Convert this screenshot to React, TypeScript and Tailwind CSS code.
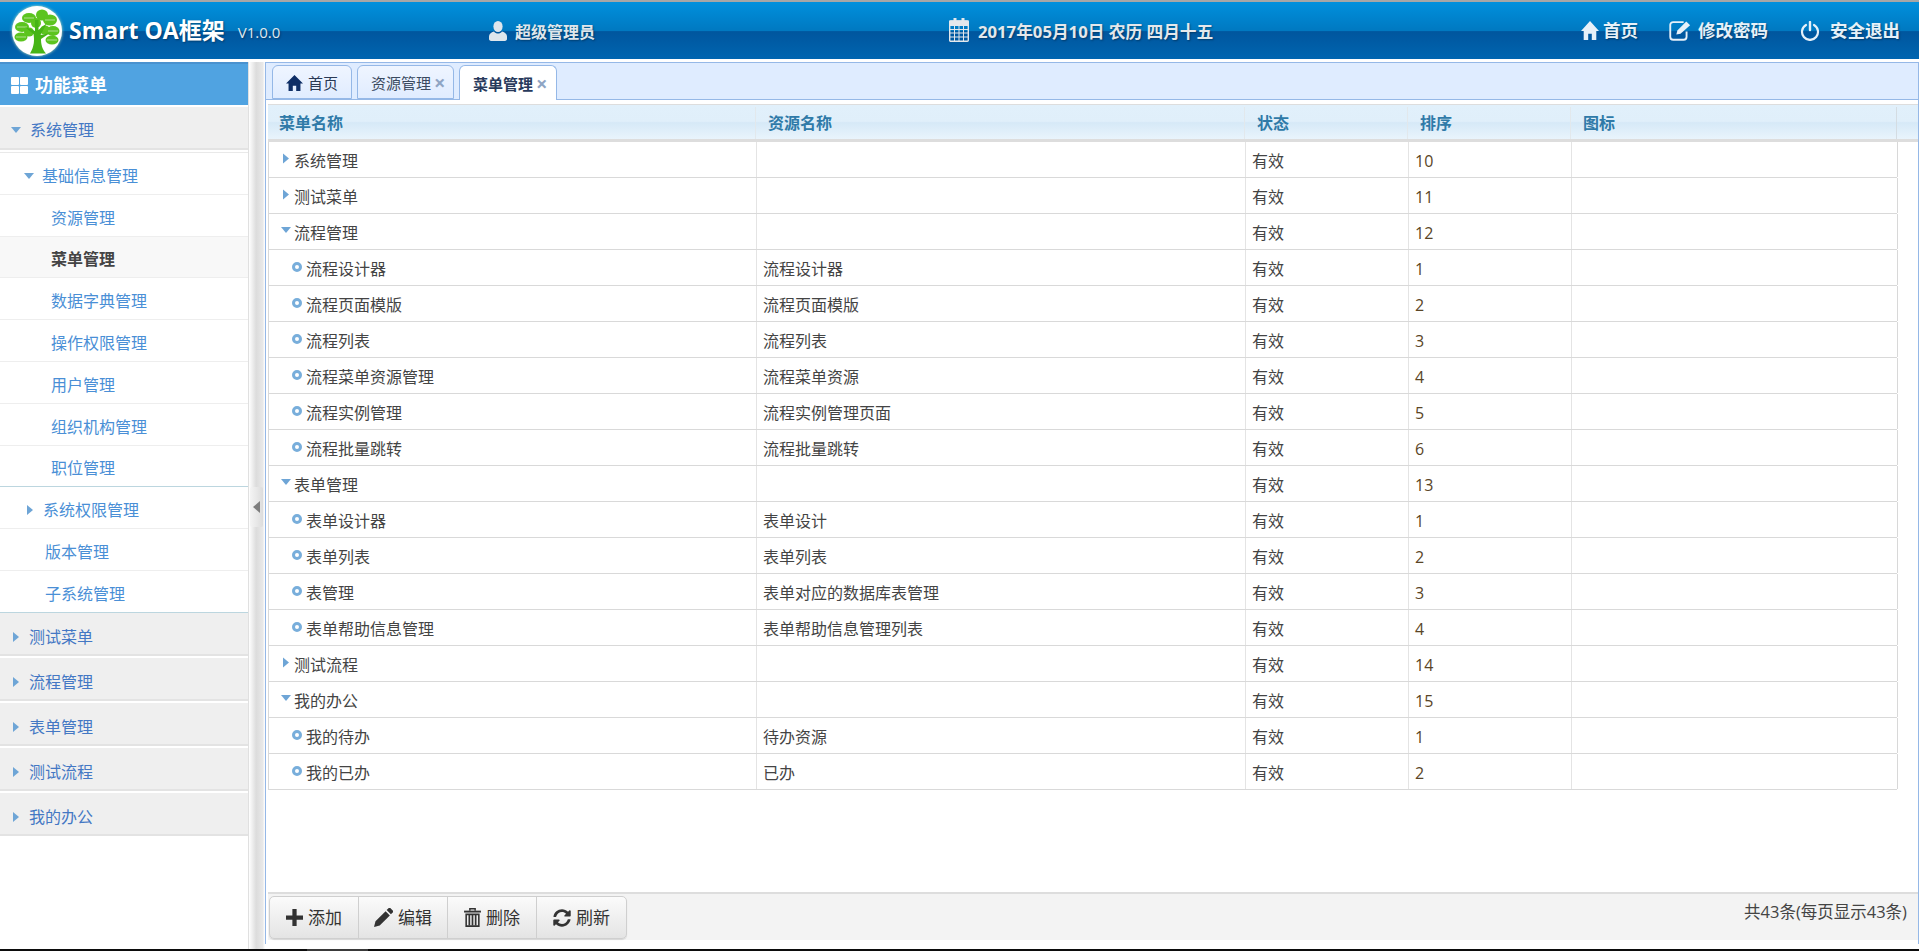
import React from 'react';
import { FaSyncAlt } from 'react-icons/fa';

type Row = { name: string; res: string; order: number; kind: 'closed' | 'open' | 'leaf' };

const rows: Row[] = [
	{ name: '系统管理', res: '', order: 10, kind: 'closed' },
	{ name: '测试菜单', res: '', order: 11, kind: 'closed' },
	{ name: '流程管理', res: '', order: 12, kind: 'open' },
	{ name: '流程设计器', res: '流程设计器', order: 1, kind: 'leaf' },
	{ name: '流程页面模版', res: '流程页面模版', order: 2, kind: 'leaf' },
	{ name: '流程列表', res: '流程列表', order: 3, kind: 'leaf' },
	{ name: '流程菜单资源管理', res: '流程菜单资源', order: 4, kind: 'leaf' },
	{ name: '流程实例管理', res: '流程实例管理页面', order: 5, kind: 'leaf' },
	{ name: '流程批量跳转', res: '流程批量跳转', order: 6, kind: 'leaf' },
	{ name: '表单管理', res: '', order: 13, kind: 'open' },
	{ name: '表单设计器', res: '表单设计', order: 1, kind: 'leaf' },
	{ name: '表单列表', res: '表单列表', order: 2, kind: 'leaf' },
	{ name: '表管理', res: '表单对应的数据库表管理', order: 3, kind: 'leaf' },
	{ name: '表单帮助信息管理', res: '表单帮助信息管理列表', order: 4, kind: 'leaf' },
	{ name: '测试流程', res: '', order: 14, kind: 'closed' },
	{ name: '我的办公', res: '', order: 15, kind: 'open' },
	{ name: '我的待办', res: '待办资源', order: 1, kind: 'leaf' },
	{ name: '我的已办', res: '已办', order: 2, kind: 'leaf' },
];

const subItems = ['资源管理', '菜单管理', '数据字典管理', '操作权限管理', '用户管理', '组织机构管理', '职位管理'];
const groups = ['测试菜单', '流程管理', '表单管理', '测试流程', '我的办公'];

const TriRight = ({ className }: { className: string }) => (
	<svg viewBox="0 0 6 10" className={className}>
		<polygon points="0,0 6,5 0,10" fill="#6ea5d6" />
	</svg>
);

const TriDown = ({ className }: { className: string }) => (
	<svg viewBox="0 0 10 6" className={className}>
		<polygon points="0,0 10,0 5,6" fill="#6ea5d6" />
	</svg>
);

const HomeIcon = ({ className }: { className: string }) => (
	<svg viewBox="0 0 20 18" className={className} fill="currentColor" preserveAspectRatio="none">
		<path d="M10 0 L20 9.5 H17 V18 H12 V12 H8 V18 H3 V9.5 H0 Z" />
	</svg>
);

const UserIcon = ({ className }: { className: string }) => (
	<svg viewBox="0 0 18 20" className={className} fill="currentColor">
		<ellipse cx="9" cy="5.5" rx="4.6" ry="5.5" />
		<path d="M5 10.5 C2 11.5 0 13 0 15.5 V18 C0 19.4 1.5 20 3 20 H15 C16.5 20 18 19.4 18 18 V15.5 C18 13 16 11.5 13 10.5 C12 12 10.5 12.6 9 12.6 C7.5 12.6 6 12 5 10.5 Z" />
	</svg>
);

const CalendarIcon = ({ className }: { className: string }) => (
	<svg viewBox="0 0 20 24" className={className} fill="none" stroke="currentColor">
		<rect x="0.7" y="3" width="18.6" height="20.3" rx="1" strokeWidth="1.4" />
		<rect x="0.7" y="3" width="18.6" height="4.5" fill="currentColor" strokeWidth="1" />
		<path d="M6 0.5 V5 M14 0.5 V5" strokeWidth="3" strokeLinecap="round" />
		<path d="M1 11.5 H19 M1 15 H19 M1 19 H19 M5.5 7.5 V23 M10 7.5 V23 M14.5 7.5 V23" strokeWidth="1" />
	</svg>
);

const EditIcon = ({ className }: { className: string }) => (
	<svg viewBox="0 0 22 20" className={className} fill="none" stroke="currentColor">
		<path d="M14 2 H4 C2.4 2 1.2 3 1.2 4.6 V16 C1.2 17.7 2.4 18.8 4 18.8 H14 C15.6 18.8 16.8 17.7 16.8 16 V11" strokeWidth="1.8" />
		<path d="M7 13.8 L8 10 L16.5 1.5 L20.2 5 L11 13 Z" fill="currentColor" stroke="none" />
	</svg>
);

const PowerIcon = ({ className }: { className: string }) => (
	<svg viewBox="0 0 20 20" className={className} fill="none" stroke="currentColor">
		<path d="M6 4 A8 8 0 1 0 14 4" strokeWidth="2.2" strokeLinecap="round" />
		<path d="M10 1 V9" strokeWidth="2.4" strokeLinecap="round" />
	</svg>
);

const GridIcon = () => (
	<div className="grid h-[17px] w-[17px] grid-cols-2 gap-[1.5px]">
		<span className="rounded-[1px] bg-white" />
		<span className="rounded-[1px] bg-white" />
		<span className="rounded-[1px] bg-white" />
		<span className="rounded-[1px] bg-white" />
	</div>
);

const PlusIcon = () => (
	<svg viewBox="0 0 16 16" className="h-[17px] w-[17px]" fill="#333">
		<path d="M6 0 H10 V6 H16 V10 H10 V16 H6 V10 H0 V6 H6 Z" />
	</svg>
);

const PencilIcon = () => (
	<svg viewBox="0 0 18 18" className="h-[19px] w-[19px]" fill="#333">
		<path d="M0 18 L1.4 12.6 L11 3 L15 7 L5.4 16.6 Z M12 2 L14 0 C14.6 -0.4 15 -0.4 15.4 0 L18 2.6 C18.4 3 18.4 3.4 18 4 L16 6 Z" />
	</svg>
);

const TrashIcon = () => (
	<svg viewBox="0 0 16 18" className="h-[19px] w-[17px]" fill="none" stroke="#333">
		<path d="M0 3.4 H16" strokeWidth="1.8" />
		<path d="M5.5 2.5 V0.8 H10.5 V2.5" strokeWidth="1.4" />
		<path d="M2 6 H14 V17.2 H2 Z" strokeWidth="1.5" />
		<path d="M5 6.5 V16.5 M8 6.5 V16.5 M11 6.5 V16.5" strokeWidth="1.6" />
	</svg>
);

const TreeLogo = () => (
	<div className="flex h-[50px] w-[50px] items-center justify-center rounded-full bg-white shadow-[0_0_3px_#cfe8c0]">
		<svg viewBox="0 0 50 50" className="h-[50px] w-[50px]">
			<g fill="#5cc41f">
				<ellipse cx="17" cy="12" rx="7" ry="5" />
				<ellipse cx="30" cy="9" rx="6" ry="5.5" />
				<ellipse cx="38" cy="14" rx="7" ry="5.5" />
				<ellipse cx="10" cy="21" rx="7" ry="5" />
				<ellipse cx="24" cy="17" rx="5" ry="5" />
				<ellipse cx="41" cy="25" rx="6.5" ry="5" />
				<ellipse cx="9" cy="31" rx="6.5" ry="4.5" />
				<ellipse cx="40" cy="34" rx="6.5" ry="4.5" />
				<ellipse cx="17" cy="26" rx="5" ry="4.5" />
				<ellipse cx="33" cy="24" rx="5" ry="4.5" />
			</g>
			<g stroke="#ffffff" strokeWidth="0.5" fill="none">
				<path d="M12 12 L22 12 M33 14 L43 14 M5 21 L15 21 M36 25 L46 25 M4 31 L14 31 M35 34 L45 34" />
			</g>
			<path d="M18 47.5 C22.5 40 22.5 34 21.5 28 L13 21 L23 25 L23 14 L26.5 14 L26.5 24 L35 17 L28.5 29 L38 27 L29 33 C29 38 30 43 34 47.5 Z" fill="#46b416" />
		</svg>
	</div>
);

const Tab = ({ label, active, home }: { label: string; active?: boolean; home?: boolean }) => (
	<div
		className={`flex h-[34px] items-center rounded-t-[6px] border border-[#95b8e7] pt-[2px] text-[15px] ${
			active
				? 'h-[35px] w-[98px] -mb-px border-b-0 bg-white pl-[13px] font-bold text-[#283a5c]'
				: home
					? 'w-[80px] bg-gradient-to-b from-[#eff5ff] to-[#e0ecff] pl-[13px] text-[#2a3a55]'
					: 'w-[97px] bg-gradient-to-b from-[#eff5ff] to-[#e0ecff] pl-[13px] text-[#3a4a60]'
		}`}
	>
		{home && <HomeIcon className="mr-[5px] h-[16px] w-[17px] text-[#0e2e66]" />}
		<span>{label}</span>
		{!home && <span className="ml-[3px] text-[20px] font-bold leading-none text-[#8fa5c4]">×</span>}
	</div>
);

const ToolButton = ({ icon, label, last }: { icon: React.ReactNode; label: string; last?: boolean }) => (
	<div
		className={`flex h-full w-[89px] items-center justify-center gap-[5px] text-[17px] text-[#333] ${
			last ? '' : 'border-r border-[#cfcfcf]'
		}`}
	>
		{icon}
		<span>{label}</span>
	</div>
);

export default function App() {
	return (
		<div className="flex h-[951px] w-[1919px] flex-col overflow-hidden bg-white font-['Open_Sans','Noto_Sans_CJK_SC',sans-serif]">
			{/* top bar */}
			<header className="flex h-[59px] shrink-0 items-center border-t-2 border-[#a6a6a6] bg-[linear-gradient(to_bottom,#0090dd_0%,#0079c1_50%,#00569e_52%,#0065b0_100%)] text-white [text-shadow:1px_1px_2px_rgba(0,0,0,0.35)]">
				<div className="ml-[12px] flex w-[477px] items-center">
					<TreeLogo />
					<span className="ml-[7px] text-[23px] font-bold leading-none">Smart OA框架</span>
					<span className="ml-[13px] mt-[3px] text-[15px] text-[#dfe8f0]">V1.0.0</span>
				</div>
				<div className="flex w-[460px] items-center text-[#dfe6ec]">
					<UserIcon className="h-[20px] w-[18px]" />
					<span className="ml-[8px] mt-[3px] text-[16px] font-bold">超级管理员</span>
				</div>
				<div className="flex items-center text-[#e4e8ec]">
					<CalendarIcon className="h-[24px] w-[20px]" />
					<span className="ml-[9px] mt-[3px] text-[16.7px] font-bold">2017年05月10日 农历 四月十五</span>
				</div>
				<div className="ml-auto mr-[19px] flex items-center text-[#e6f1f9]">
					<HomeIcon className="h-[19px] w-[18px]" />
					<span className="ml-[4px] text-[17.5px] font-bold">首页</span>
					<EditIcon className="ml-[31px] h-[21px] w-[23px]" />
					<span className="ml-[6px] text-[17.5px] font-bold">修改密码</span>
					<PowerIcon className="ml-[32px] h-[20px] w-[20px]" />
					<span className="ml-[10px] text-[17.5px] font-bold">安全退出</span>
				</div>
			</header>

			<div className="flex min-h-0 flex-1 pt-[3px]">
				{/* side menu */}
				<aside className="w-[249px] shrink-0 border-r border-[#e0e0e0]">
					<div className="flex h-[43px] items-center border-t-2 border-[#4a92cf] bg-[#50a3e1] pl-[11px] pt-[2px] text-[18px] font-bold text-white">
						<GridIcon />
						<span className="ml-[7px]">功能菜单</span>
					</div>
					<div className="mt-[2px] flex h-[43px] items-center border-b-2 border-[#e3e3e3] bg-[#efefef] pl-[11px] pt-[5px] text-[16px] text-[#4478c4]">
						<TriDown className="h-[6px] w-[10px]" />
						<span className="ml-[9px]">系统管理</span>
					</div>
					<div className="mt-[2px] border-t border-[#e9e9e9]">
						<div className="flex h-[41.8px] items-center border-b border-[#eeeeee] pl-[24px] pt-[5px] text-[16px] text-[#4a8fd6]">
							<TriDown className="h-[6px] w-[10px]" />
							<span className="ml-[8px]">基础信息管理</span>
						</div>
						{subItems.map((s) => (
							<div
								key={s}
								className={`flex h-[41.8px] items-center border-b pl-[51px] pt-[5px] text-[16px] ${
									s === '职位管理' ? 'border-[#bcd6df]' : 'border-[#eeeeee]'
								} ${s === '菜单管理' ? 'bg-[#f8f8f8] font-bold text-[#444]' : 'text-[#4a8fd6]'}`}
							>
								{s}
							</div>
						))}
						<div className="flex h-[41.8px] items-center border-b border-[#eeeeee] pl-[27px] pt-[5px] text-[16px] text-[#4a8fd6]">
							<TriRight className="h-[10px] w-[6px]" />
							<span className="ml-[10px]">系统权限管理</span>
						</div>
						<div className="flex h-[41.8px] items-center border-b border-[#eeeeee] pl-[45px] pt-[5px] text-[16px] text-[#4a8fd6]">版本管理</div>
						<div className="flex h-[41.8px] items-center border-b border-[#bcd6df] pl-[45px] pt-[5px] text-[16px] text-[#4a8fd6]">子系统管理</div>
					</div>
					{groups.map((g) => (
						<div key={g} className="mb-[2px] flex h-[43px] items-center border-b-2 border-[#e3e3e3] bg-[#efefef] pl-[13px] pt-[7px] text-[16px] text-[#4478c4]">
							<TriRight className="h-[10px] w-[6px]" />
							<span className="ml-[10px]">{g}</span>
						</div>
					))}
				</aside>

				{/* splitter */}
				<div className="relative w-[16px] shrink-0 bg-[linear-gradient(to_right,#fff_0%,#dcdcdc_45%,#e8e8e8_85%,#fff_100%)]">
					<div className="absolute left-[1px] top-[425px] flex h-[40px] w-[13px] items-center justify-center rounded-[2px] bg-[linear-gradient(to_right,#f4f4f4,#dcdcdc)]">
						<svg viewBox="0 0 7 12" className="h-[12px] w-[7px]">
							<polygon points="7,0 7,12 0,6" fill="#7d7d7d" />
						</svg>
					</div>
				</div>

				{/* main panel */}
				<main className="flex h-[882px] min-w-0 flex-1 flex-col border-x border-t border-[#95b8e7]">
					<div className="flex h-[37px] shrink-0 items-end gap-[5px] border-b border-[#95b8e7] bg-[#dfecff] pl-[6px]">
						<Tab label="首页" home />
						<Tab label="资源管理" />
						<Tab label="菜单管理" active />
					</div>
					<div className="flex min-h-0 flex-1 flex-col pb-[4px] pl-[2px] pt-[4px]">
						<div className="flex h-[38px] shrink-0 border-y border-[#dddddd] border-b-[3px] bg-[linear-gradient(to_bottom,#e1f0fb_0%,#e0effa_48%,#d6e9f7_52%,#e9f4fc_100%)] pt-[2px] text-[16px] font-bold text-[#2f7aa8]">
							<div className="grid w-[1629px] grid-cols-[488px_489px_163px_163px_326px]">
								<div className="flex items-center border-r border-[#e2e8ec] pl-[11px]">菜单名称</div>
								<div className="flex items-center border-r border-[#e2e8ec] pl-[12px]">资源名称</div>
								<div className="flex items-center border-r border-[#e2e8ec] pl-[12px]">状态</div>
								<div className="flex items-center border-r border-[#e2e8ec] pl-[12px]">排序</div>
								<div className="flex items-center border-r border-[#d4dce2] pl-[12px]">图标</div>
							</div>
						</div>
						<div className="min-h-0 flex-1">
							{rows.map((r, i) => (
								<div
									key={i}
									className="grid h-[36px] w-[1629px] grid-cols-[488px_489px_163px_163px_326px] border-b border-l border-[#d9d9d9] text-[16px] text-[#444]"
								>
									<div className="flex items-center border-r border-[#e4e4e4] pt-[2px]">
										{r.kind === 'closed' && <TriRight className="ml-[14px] mb-[4px] mr-[5px] h-[11px] w-[6px]" />}
										{r.kind === 'open' && <TriDown className="ml-[12px] mb-[5px] mr-[3px] h-[6px] w-[10px]" />}
										{r.kind === 'leaf' && <span className="mb-[3px] ml-[23px] mr-[4px] h-[10px] w-[10px] rounded-full border-[3px] border-[#78aedb]" />}
										<span>{r.name}</span>
									</div>
									<div className="flex items-center border-r border-[#e4e4e4] pl-[6px] pt-[2px]">{r.res}</div>
									<div className="flex items-center border-r border-[#e4e4e4] pl-[6px] pt-[2px]">有效</div>
									<div className="flex items-center border-r border-[#e4e4e4] pl-[6px] pt-[2px] text-[#5a4526]">{r.order}</div>
									<div className="border-r border-[#d8d8d8]" />
								</div>
							))}
						</div>
						<div className="flex h-[48px] shrink-0 justify-between border-t-2 border-[#dddddd] bg-[#f3f3f3]">
							<div className="ml-[1px] mt-[2px] flex h-[43px] rounded-[5px] border border-[#cfcfcf] bg-gradient-to-b from-[#fbfbfb] to-[#e4e4e4] shadow-[0_1px_1px_rgba(0,0,0,0.12)]">
								<ToolButton icon={<PlusIcon />} label="添加" />
								<ToolButton icon={<PencilIcon />} label="编辑" />
								<ToolButton icon={<TrashIcon />} label="删除" />
								<ToolButton icon={<FaSyncAlt className="h-[18px] w-[18px] text-[#333]" />} label="刷新" last />
							</div>
							<span className="mr-[11px] mt-[6px] text-[16.5px] text-[#444]">共43条(每页显示43条)</span>
						</div>
					</div>
				</main>
			</div>

			{/* window edge */}
			<div className="flex h-[2px] shrink-0 bg-[#0c0c0c]">
				<span className="ml-[307px] w-[61px] bg-[#3a3a3a]" />
			</div>
		</div>
	);
}
